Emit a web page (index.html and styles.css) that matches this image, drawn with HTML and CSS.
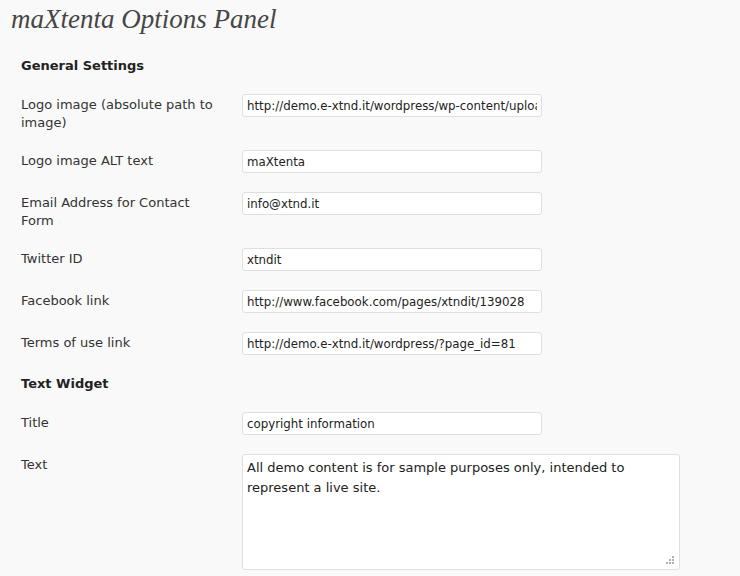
FILE: index.html
```html
<!DOCTYPE html>
<html>
<head>
<meta charset="utf-8">
<link rel="stylesheet" href="styles.css">
</head>
<body>
<div class="wrap">
  <h2 class="page-title">maXtenta Options Panel</h2>

  <h3 class="section">General Settings</h3>
  <div class="form">
    <div class="row"><div class="label">Logo image (absolute path to image)</div><div class="field"><input class="text" type="text" value="http://demo.e-xtnd.it/wordpress/wp-content/uploads/logo.png"></div></div>
    <div class="row"><div class="label">Logo image ALT text</div><div class="field"><input class="text" type="text" value="maXtenta"></div></div>
    <div class="row"><div class="label">Email Address for Contact Form</div><div class="field"><input class="text" type="text" value="info@xtnd.it"></div></div>
    <div class="row"><div class="label">Twitter ID</div><div class="field"><input class="text" type="text" value="xtndit"></div></div>
    <div class="row"><div class="label">Facebook link</div><div class="field"><input class="text" type="text" value="http://www.facebook.com/pages/xtndit/139028"></div></div>
    <div class="row"><div class="label">Terms of use link</div><div class="field"><input class="text" type="text" value="http://demo.e-xtnd.it/wordpress/?page_id=81"></div></div>
  </div>

  <h3 class="section">Text Widget</h3>
  <div class="form">
    <div class="row"><div class="label">Title</div><div class="field"><input class="text" type="text" value="copyright information"></div></div>
    <div class="row"><div class="label">Text</div><div class="field"><div class="area-wrap"><textarea class="area">All demo content is for sample purposes only, intended to represent a live site.</textarea><svg class="grip" width="10" height="10" viewBox="0 0 10 10"><rect x="7" y="1" width="2" height="2"/><rect x="4" y="4" width="2" height="2"/><rect x="7" y="4" width="2" height="2"/><rect x="1" y="7" width="2" height="2"/><rect x="4" y="7" width="2" height="2"/><rect x="7" y="7" width="2" height="2"/></svg></div></div></div>
  </div>
</div>
</body>
</html>
```

FILE: styles.css
```css
html, body {
  margin: 0;
  padding: 0;
  background: #f9f9f9;
}
body {
  font-family: "DejaVu Sans", Verdana, sans-serif;
  font-size: 13px;
  color: #333;
}
.wrap {
  padding-left: 11px;
}
.page-title {
  margin: 0;
  height: 47px;
  padding-top: 3px;
  box-sizing: border-box;
  font-family: "Liberation Serif", Georgia, serif;
  font-style: italic;
  font-weight: normal;
  font-size: 27px;
  line-height: 32px;
  color: #464646;
}
.section {
  margin: 0;
  padding: 10px 10px;
  font-size: 13px;
  line-height: 18px;
  font-weight: bold;
  color: #222;
}
.row {
  display: flex;
  align-items: flex-start;
}
.label {
  width: 201px;
  padding: 11px 10px 9px;
  line-height: 18px;
  flex: none;
}
.field {
  padding: 9px 0 10px 10px;
}
.text {
  display: block;
  box-sizing: border-box;
  width: 300px;
  height: 23px;
  margin: 0;
  padding: 0 4px;
  border: 1px solid #dfdfdf;
  border-radius: 3px;
  background: #fff;
  font-family: "DejaVu Sans", Verdana, sans-serif;
  font-size: 11.8px;
  color: #222;
  outline: none;
}
.area-wrap {
  position: relative;
  width: 438px;
  height: 116px;
}
.area {
  display: block;
  box-sizing: border-box;
  width: 438px;
  height: 116px;
  margin: 0;
  padding: 3px 4px;
  border: 1px solid #dfdfdf;
  border-radius: 3px;
  background: #fff;
  font-family: "DejaVu Sans", Verdana, sans-serif;
  font-size: 13px;
  line-height: 20px;
  color: #222;
  resize: none;
  outline: none;
  overflow: hidden;
}
.grip {
  position: absolute;
  right: 5px;
  bottom: 5px;
  fill: #b0b0b0;
}
```
